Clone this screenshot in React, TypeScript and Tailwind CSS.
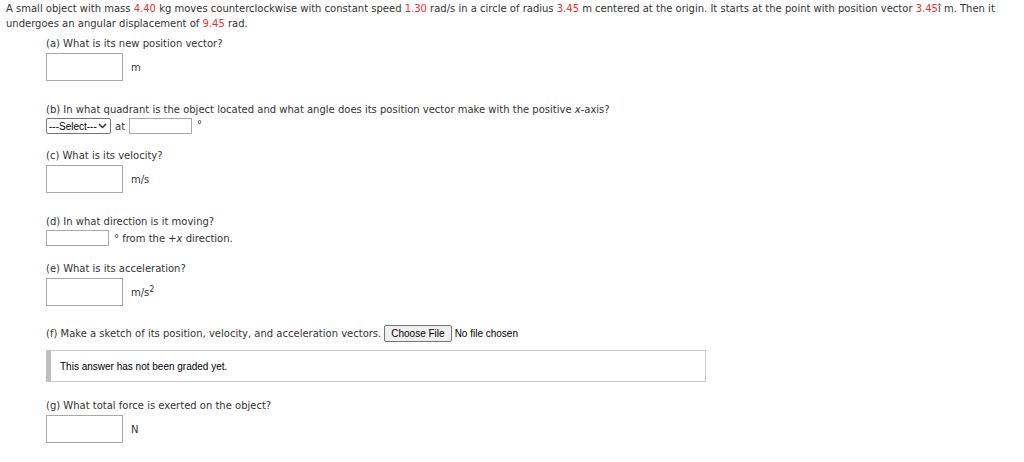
import React from "react";

const R = ({ children }: { children: React.ReactNode }) => (
  <span className="text-[#e8332c]">{children}</span>
);

const BigInput = () => (
  <div className="w-[77px] h-[28px] border border-[#a9a9a9] bg-white shrink-0" />
);

const SmallInput = ({ w }: { w: string }) => (
  <div className={`${w} h-[16px] border border-[#a9a9a9] bg-white shrink-0`} />
);

export default function App() {
  return (
    <div className="w-[1024px] h-[462px] bg-white text-[#333] text-[10px] leading-[15px] font-['DejaVu_Sans','Verdana',sans-serif] overflow-hidden">
      <div className="pl-[6px] pt-[1px] pr-[12px]">
        A small object with mass <R>4.40</R> kg moves counterclockwise with constant speed <R>1.30</R> rad/s in a circle of radius <R>3.45</R> m centered at the origin. It starts at the point with position vector <R>3.45</R>î m. Then it undergoes an angular displacement of <R>9.45</R> rad.
      </div>
      <div className="pl-[46px]">
        <div className="mt-[5px]">(a) What is its new position vector?</div>
        <div className="mt-[2px] flex items-center gap-[8px]">
          <BigInput />
          <span>m</span>
        </div>

        <div className="mt-[21px]">
          (b) In what quadrant is the object located and what angle does its position vector make with the positive <i>x</i>-axis?
        </div>
        <div className="mt-[1px] flex items-center">
          <div className="w-[65px] h-[16px] border border-[#767676] rounded-[2px] flex items-center justify-between pl-[2px] pr-[3px] font-['Liberation_Sans','Arial',sans-serif] text-[10px] text-black">
            <span>---Select---</span>
            <svg width="9" height="6" viewBox="0 0 9 6"><path d="M1 1l3.5 3.5L8 1" stroke="#333" strokeWidth="1.5" fill="none" /></svg>
          </div>
          <span className="ml-[4px]">at</span>
          <div className="ml-[4px]"><SmallInput w="w-[63px]" /></div>
          <span className="ml-[5px] relative top-[-2px]">°</span>
        </div>

        <div className="mt-[14px]">(c) What is its velocity?</div>
        <div className="mt-[2px] flex items-center gap-[8px]">
          <BigInput />
          <span>m/s</span>
        </div>

        <div className="mt-[21px]">(d) In what direction is it moving?</div>
        <div className="mt-[1px] flex items-center">
          <SmallInput w="w-[63px]" />
          <span className="ml-[5px]">° from the +<i>x</i> direction.</span>
        </div>

        <div className="mt-[15px]">(e) What is its acceleration?</div>
        <div className="mt-[2px] flex items-center gap-[8px]">
          <BigInput />
          <span>m/s<sup className="text-[8px] leading-[0]">2</sup></span>
        </div>

        <div className="mt-[19px] flex items-center h-[17px]">
          <span>(f) Make a sketch of its position, velocity, and acceleration vectors.</span>
          <div className="ml-[3px] h-[17px] px-[6px] border border-[#767676] rounded-[2px] bg-[#efefef] flex items-center font-['Liberation_Sans','Arial',sans-serif] text-[10px] text-black">Choose File</div>
          <span className="ml-[3px] font-['Liberation_Sans','Arial',sans-serif] text-[10px] text-black">No file chosen</span>
        </div>
        <div className="mt-[8px] w-[660px] h-[32px] border border-[#cccccc] border-l-[5px] border-l-[#bfbfbf] flex items-center pl-[9px] font-['Liberation_Sans','Arial',sans-serif] text-[10px] text-black">
          This answer has not been graded yet.
        </div>

        <div className="mt-[16px]">(g) What total force is exerted on the object?</div>
        <div className="mt-[2px] flex items-center gap-[8px]">
          <BigInput />
          <span>N</span>
        </div>
      </div>
    </div>
  );
}
